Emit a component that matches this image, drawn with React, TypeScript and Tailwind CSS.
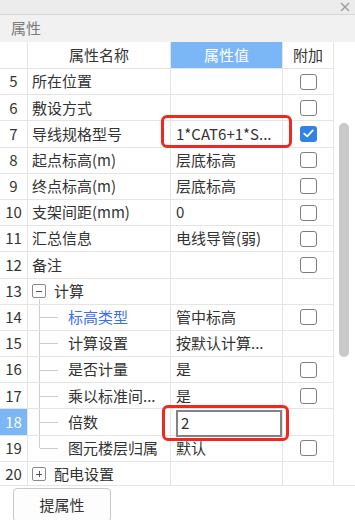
import { Fragment } from 'react';

type RowKind = 'normal' | 'group-open' | 'group-closed' | 'child';
type Check = 'none' | 'off' | 'on';

interface PropRow {
  n: number;
  name: string;
  value: string;
  kind: RowKind;
  check: Check;
  last?: boolean;
  blue?: boolean;
}

const rows: PropRow[] = [
  { n: 5, name: '所在位置', value: '', kind: 'normal', check: 'off' },
  { n: 6, name: '敷设方式', value: '', kind: 'normal', check: 'off' },
  { n: 7, name: '导线规格型号', value: '1*CAT6+1*S...', kind: 'normal', check: 'on' },
  { n: 8, name: '起点标高(m)', value: '层底标高', kind: 'normal', check: 'off' },
  { n: 9, name: '终点标高(m)', value: '层底标高', kind: 'normal', check: 'off' },
  { n: 10, name: '支架间距(mm)', value: '0', kind: 'normal', check: 'off' },
  { n: 11, name: '汇总信息', value: '电线导管(弱)', kind: 'normal', check: 'off' },
  { n: 12, name: '备注', value: '', kind: 'normal', check: 'off' },
  { n: 13, name: '计算', value: '', kind: 'group-open', check: 'none' },
  { n: 14, name: '标高类型', value: '管中标高', kind: 'child', check: 'off', blue: true },
  { n: 15, name: '计算设置', value: '按默认计算...', kind: 'child', check: 'none' },
  { n: 16, name: '是否计量', value: '是', kind: 'child', check: 'off' },
  { n: 17, name: '乘以标准间...', value: '是', kind: 'child', check: 'off' },
  { n: 18, name: '倍数', value: '2', kind: 'child', check: 'none' },
  { n: 19, name: '图元楼层归属', value: '默认', kind: 'child', check: 'off', last: true },
  { n: 20, name: '配电设置', value: '', kind: 'group-closed', check: 'none' },
];

function CheckBox({ on }: { on: boolean }) {
  if (on) {
    return (
      <span className="flex h-[16px] w-[17px] items-center justify-center rounded-[3px] bg-[#3282e6]">
        <svg width="11" height="9" viewBox="0 0 11 9" fill="none">
          <path d="M1.2 4.6 L4.2 7.4 L9.8 1.4" stroke="white" strokeWidth="1.8" strokeLinecap="round" strokeLinejoin="round" />
        </svg>
      </span>
    );
  }
  return <span className="h-[16px] w-[17px] rounded-[3px] border border-[#7d7d7d] bg-white" />;
}

function TreeBox({ open }: { open: boolean }) {
  return (
    <span className="flex h-[14px] w-[14px] items-center justify-center rounded-[2px] border border-[#8a8a8a] bg-white">
      <span className="relative block h-[1px] w-[6px] bg-[#555]">
        {!open && <span className="absolute left-[2.5px] top-[-2.5px] block h-[6px] w-[1px] bg-[#555]" />}
      </span>
    </span>
  );
}

function NameCell({ row }: { row: PropRow }) {
  if (row.kind === 'group-open' || row.kind === 'group-closed') {
    return (
      <div className="relative flex h-full items-center border-r border-b border-[#e4e4e4] pl-[4px]">
        <TreeBox open={row.kind === 'group-open'} />
        <span className="ml-[8px]">{row.name}</span>
        {row.kind === 'group-open' && (
          <span className="absolute bottom-0 left-[11px] top-[20px] w-[1px] bg-[#cdcdcd]" />
        )}
      </div>
    );
  }
  if (row.kind === 'child') {
    return (
      <div className="relative flex h-full items-center border-r border-b border-[#e4e4e4] pl-[40px]">
        <span
          className={`absolute left-[11px] top-0 w-[1px] bg-[#cdcdcd] ${row.last ? 'h-1/2' : 'h-full'}`}
        />
        <span className="absolute left-[12px] top-1/2 h-[1px] w-[18px] bg-[#cdcdcd]" />
        <span className={row.blue ? 'text-[#3a6ff0]' : ''}>{row.name}</span>
      </div>
    );
  }
  return (
    <div className="flex h-full items-center border-r border-b border-[#e4e4e4] pl-[4px]">{row.name}</div>
  );
}

export default function App() {
  return (
    <div className="relative h-[520px] w-[355px] overflow-hidden bg-white font-['Noto_Sans_CJK_SC',sans-serif] text-[15px] text-[#333]">
      {/* window strip */}
      <div className="flex h-[15px] items-center justify-end border-b border-[#d6d6d6] bg-[#ececec] pr-[5px]">
        <svg width="10" height="10" viewBox="0 0 10 10">
          <path d="M1 1 L9 9 M9 1 L1 9" stroke="#9a9a9a" strokeWidth="1.3" />
        </svg>
      </div>
      <div className="flex h-[27px] items-center bg-[#f1f1f1] pl-[11px] text-[#7b7b7b]">属性</div>

      <div className="flex">
        <div className="w-[334px]">
          <div className="grid h-[27px] grid-cols-[28px_143px_112px_51px]">
            <div className="border-r border-b border-[#e4e4e4]" />
            <div className="flex items-center justify-center border-r border-b border-[#e4e4e4]">属性名称</div>
            <div className="flex items-center justify-center border-r border-b border-[#e4e4e4] bg-[#7bb6f6] text-white">
              属性值
            </div>
            <div className="flex items-center justify-center border-r border-b border-[#e4e4e4]">附加</div>
          </div>
          <div className="h-[416px] overflow-hidden">
            <div className="grid auto-rows-[26.2px] grid-cols-[28px_143px_112px_51px]">
              {rows.map((row) => (
                <Fragment key={row.n}>
                  <div
                    className={`flex items-center justify-center border-r border-b border-[#e4e4e4] ${
                      row.n === 18 ? 'bg-[#7bb6f6] text-white' : ''
                    }`}
                  >
                    {row.n}
                  </div>
                  <NameCell row={row} />
                  <div className="flex items-center border-r border-b border-[#e4e4e4] pl-[5px]">
                    {row.n === 18 ? (
                      <div className="flex h-[27px] w-[113px] items-center border-2 border-[#838383] bg-white pl-[3px] mt-[3px]">
                        {row.value}
                      </div>
                    ) : (
                      row.value
                    )}
                  </div>
                  <div className="flex items-center justify-center border-r border-b border-[#e4e4e4]">
                    {row.check !== 'none' && <CheckBox on={row.check === 'on'} />}
                  </div>
                </Fragment>
              ))}
            </div>
          </div>
        </div>
        <div className="w-[21px] pt-[81px]">
          <div className="ml-[5px] h-[234px] w-[10px] rounded-full bg-[#c9c9c9]" />
        </div>
      </div>

      <div className="border-t border-[#e4e4e4] pl-[13px] pt-[2px]">
        <button
          type="button"
          className="flex h-[34px] w-[98px] items-center justify-center rounded-[4px] border border-[#c8c8c8] bg-[#fdfdfd] text-[15px] text-[#333]"
        >
          提属性
        </button>
      </div>

      {/* annotation boxes */}
      <div className="pointer-events-none absolute left-[161px] top-[115px] h-[33px] w-[131px] rounded-[6px] border-[3px] border-[#ee2a1f]" />
      <div className="pointer-events-none absolute left-[162px] top-[405px] h-[36px] w-[127px] rounded-[6px] border-[3px] border-[#ee2a1f]" />
    </div>
  );
}
